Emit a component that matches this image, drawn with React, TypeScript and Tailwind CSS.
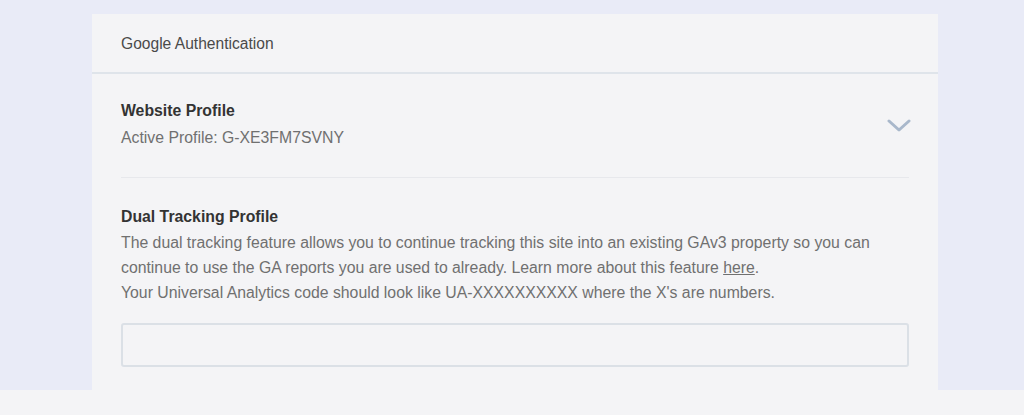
import React from 'react';

export default function App() {
  return (
    <div className="w-[1024px] h-[415px] overflow-hidden bg-[#e9ebf7] flex flex-col font-['Liberation_Sans',Arial,sans-serif]">
      <div className="flex-1 flex justify-start pl-[92px] pt-[14px] min-h-0">
        <div className="w-[846px] bg-[#f4f4f6] flex flex-col">
          {/* header */}
          <div className="h-[60px] shrink-0 flex items-center px-[29px] pt-[1px] border-b-2 border-[#dfe4ea] text-[15.6px] text-[#4a4a4a]">
            Google Authentication
          </div>

          <div className="px-[29px]">
            {/* website profile */}
            <div className="flex items-center justify-between pt-[27px] pb-[29px] border-b border-[#e7e8ec]">
              <div>
                <div className="text-[15.8px] font-bold text-[#333] leading-[20px]">Website Profile</div>
                <div className="text-[15.8px] text-[#707070] leading-[20px] mt-[7px]">Active Profile: G-XE3FM7SVNY</div>
              </div>
              <svg width="24" height="14" viewBox="0 0 24 14" className="mr-[-2px] mt-[3px]">
                <path d="M2 2 L12 11 L22 2" fill="none" stroke="#a9b8cb" strokeWidth="3" strokeLinecap="round" strokeLinejoin="round" />
              </svg>
            </div>

            {/* dual tracking */}
            <div className="pt-[29px]">
              <div className="text-[15.8px] font-bold text-[#333] leading-[20px]">Dual Tracking Profile</div>
              <p className="text-[15.8px] text-[#707070] leading-[25px] mt-[3px]">
                The dual tracking feature allows you to continue tracking this site into an existing GAv3 property so you can
                <br />
                continue to use the GA reports you are used to already. Learn more about this feature{' '}
                <a className="underline">here</a>.
                <br />
                Your Universal Analytics code should look like UA-XXXXXXXXXX where the X's are numbers.
              </p>
              <input
                type="text"
                className="mt-[18px] block w-full h-[44px] rounded-[3px] border-2 border-[#dbe0e6] bg-[#f4f4f6] outline-none"
              />
            </div>
          </div>
        </div>
      </div>
      <div className="h-[25px] bg-[#f4f4f6] shrink-0" />
    </div>
  );
}
